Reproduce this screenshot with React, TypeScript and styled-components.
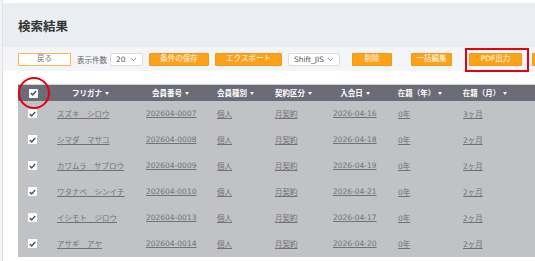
import React from "react";
import styled, { createGlobalStyle, css } from "styled-components";
import { ChevronDown } from "lucide-react";

type Member = {
  kana: string;
  no: string;
  kind: string;
  contract: string;
  joined: string;
  years: string;
  months: string;
};

const members: Member[] = [
  { kana: "スズキ　シロウ", no: "202604-0007", kind: "個人", contract: "月契約", joined: "2026-04-16", years: "0年", months: "3ヶ月" },
  { kana: "シマダ　マサコ", no: "202604-0008", kind: "個人", contract: "月契約", joined: "2026-04-18", years: "0年", months: "2ヶ月" },
  { kana: "カワムラ　サブロウ", no: "202604-0009", kind: "個人", contract: "月契約", joined: "2026-04-19", years: "0年", months: "2ヶ月" },
  { kana: "ワタナベ　シンイチ", no: "202604-0010", kind: "個人", contract: "月契約", joined: "2026-04-21", years: "0年", months: "2ヶ月" },
  { kana: "イシモト　ジロウ", no: "202604-0013", kind: "個人", contract: "月契約", joined: "2026-04-17", years: "0年", months: "2ヶ月" },
  { kana: "アサギ　アヤ", no: "202604-0014", kind: "個人", contract: "月契約", joined: "2026-04-20", years: "0年", months: "2ヶ月" },
];

const columns = [
  { label: "フリガナ", w: 89, pad: 11 },
  { label: "会員番号", w: 71, pad: 11 },
  { label: "会員種別", w: 59, pad: 11 },
  { label: "契約区分", w: 57, pad: 10 },
  { label: "入会日", w: 66, pad: 11 },
  { label: "在籍（年）", w: 64, pad: 10 },
  { label: "在籍（月）", w: 66, pad: 11 },
  { label: "契約更新日", w: 90, pad: 12 },
];

const Check = () => (
  <CheckBox>
    <svg width="7" height="6" viewBox="0 0 7 6">
      <path d="M0.8 3.1 L2.7 4.9 L6.2 0.9" fill="none" stroke="#555" strokeWidth="1.5" />
    </svg>
  </CheckBox>
);

const App = () => {
  return (
    <>
      <GlobalStyle />
      <Page>
        <SideStrip />
        <Main>
          <Header>
            <Title>検索結果</Title>
          </Header>
          <Toolbar>
            <Button $variant="outline" $w={53}>
              戻る
            </Button>
            <Label>表示件数</Label>
            <Select $w={33} $ml={-3}>
              <span>20</span>
              <ChevronDown size={9} strokeWidth={2} />
            </Select>
            <Button $w={60}>条件の保存</Button>
            <Button $w={67}>エクスポート</Button>
            <Select $w={52}>
              <span>Shift_JIS</span>
              <ChevronDown size={9} strokeWidth={2} />
            </Select>
            <Button $w={40} $ml={6}>
              削除
            </Button>
            <Button $w={41} $ml={13}>
              一括編集
            </Button>
            <Button $w={53} $ml={11}>
              PDF出力
              <RedBox />
            </Button>
            <Button $w={60} $ml={4}>
              CSV出力
            </Button>
          </Toolbar>
          <TableWrap>
            <Table>
              <thead>
                <tr>
                  <Th $w={28} $pad={11}>
                    <CheckHolder>
                      <Check />
                      <RedCircle />
                    </CheckHolder>
                  </Th>
                  {columns.map((c) => (
                    <Th key={c.label} $w={c.w}>
                      {c.label}
                      <Caret />
                    </Th>
                  ))}
                </tr>
              </thead>
              <tbody>
                {members.map((m) => (
                  <tr key={m.no}>
                    <Td $pad={10}>
                      <Check />
                    </Td>
                    <Td $pad={11}>
                      <Link>{m.kana}</Link>
                    </Td>
                    <Td $pad={11}>
                      <Link>{m.no}</Link>
                    </Td>
                    <Td $pad={11}>
                      <Link>{m.kind}</Link>
                    </Td>
                    <Td $pad={10}>
                      <Link>{m.contract}</Link>
                    </Td>
                    <Td $pad={11}>
                      <Link>{m.joined}</Link>
                    </Td>
                    <Td $pad={10}>
                      <Link>{m.years}</Link>
                    </Td>
                    <Td $pad={11}>
                      <Link>{m.months}</Link>
                    </Td>
                    <Td $pad={12} />
                  </tr>
                ))}
              </tbody>
            </Table>
          </TableWrap>
        </Main>
      </Page>
    </>
  );
};

export default App;

const GlobalStyle = createGlobalStyle`
  html, body {
    margin: 0;
    padding: 0;
    background: #fff;
    overflow: hidden;
  }
  body {
    font-family: "DejaVu Sans", "Noto Sans CJK JP", sans-serif;
  }
`;

const Page = styled.div`
  display: flex;
  width: 535px;
  height: 261px;
  overflow: hidden;
`;

const SideStrip = styled.div`
  flex: 0 0 2px;
  background: #f4f4f4;
  border-right: 1px solid #e2e2e2;
`;

const Main = styled.div`
  flex: 1;
  min-width: 0;
  display: flex;
  flex-direction: column;
  padding-top: 3px;
`;

const Header = styled.header`
  height: 44px;
  display: flex;
  align-items: center;
  padding-left: 15px;
  background: #eaedf1;
`;

const Title = styled.h1`
  margin: 0;
  font-size: 12.5px;
  font-weight: 700;
  color: #333;
`;

const Toolbar = styled.div`
  height: 24px;
  display: flex;
  align-items: center;
  gap: 6px;
  padding-left: 15px;
  background: #f4f5f8;
  white-space: nowrap;
`;

const Button = styled.button<{ $variant?: "primary" | "outline"; $w: number; $ml?: number }>`
  position: relative;
  flex: 0 0 auto;
  box-sizing: border-box;
  width: ${(p) => p.$w}px;
  height: 13px;
  margin-left: ${(p) => p.$ml ?? 0}px;
  padding: 0;
  border-radius: 1px;
  font-family: inherit;
  font-size: 7.5px;
  line-height: 1;
  cursor: pointer;
  ${(p) =>
    p.$variant === "outline"
      ? css`
          background: #fff;
          border: 1px solid #f7b54a;
          color: #7a7a7a;
        `
      : css`
          background: #fba11a;
          border: 1px solid #f59a10;
          color: #fff;
        `}
`;

const RedBox = styled.span`
  position: absolute;
  top: -6px;
  left: -5px;
  right: -8px;
  bottom: -7px;
  border: 2px solid #e60012;
  pointer-events: none;
`;

const Label = styled.span`
  font-size: 7.5px;
  color: #666;
`;

const Select = styled.div<{ $w: number; $ml?: number }>`
  flex: 0 0 auto;
  box-sizing: border-box;
  width: ${(p) => p.$w}px;
  height: 13px;
  margin-left: ${(p) => p.$ml ?? 0}px;
  display: flex;
  align-items: center;
  justify-content: space-between;
  padding: 0 4px 0 5px;
  background: #fff;
  border: 1px solid #dcdcdc;
  border-radius: 2px;
  font-size: 7.5px;
  color: #555;

  svg {
    color: #666;
  }
`;

const TableWrap = styled.div`
  margin-top: 13px;
  padding-left: 15px;
`;

const Table = styled.table`
  table-layout: fixed;
  border-collapse: collapse;
  width: 590px;
  font-size: 7.5px;
`;

const Th = styled.th<{ $w: number; $pad?: number }>`
  box-sizing: border-box;
  width: ${(p) => p.$w}px;
  height: 16px;
  padding: 0 0 0 ${(p) => p.$pad ?? 0}px;
  background: #6b6c75;
  border-top: 1px solid #d0d0d4;
  color: #fff;
  font-weight: 700;
  text-align: ${(p) => (p.$pad ? "left" : "center")};
  white-space: nowrap;
  vertical-align: middle;
`;

const Caret = styled.span`
  display: inline-block;
  margin-left: 3px;
  vertical-align: 1px;
  border-left: 2.5px solid transparent;
  border-right: 2.5px solid transparent;
  border-top: 3px solid #fff;
`;

const Td = styled.td<{ $pad: number }>`
  box-sizing: border-box;
  height: 26px;
  padding: 0 0 0 ${(p) => p.$pad}px;
  background: #c0c2c5;
  white-space: nowrap;
  vertical-align: middle;
`;

const Link = styled.a`
  color: #727272;
  text-decoration: underline;
  text-underline-offset: 1px;
`;

const CheckHolder = styled.span`
  position: relative;
  display: inline-block;
  vertical-align: middle;
`;

const CheckBox = styled.span`
  display: inline-flex;
  align-items: center;
  justify-content: center;
  width: 9px;
  height: 9px;
  background: #fff;
  border-radius: 1px;
  vertical-align: middle;
`;

const RedCircle = styled.span`
  position: absolute;
  top: -11.5px;
  left: -11.5px;
  width: 32px;
  height: 32px;
  box-sizing: border-box;
  border: 2px solid #e60012;
  border-radius: 50%;
  pointer-events: none;
`;
